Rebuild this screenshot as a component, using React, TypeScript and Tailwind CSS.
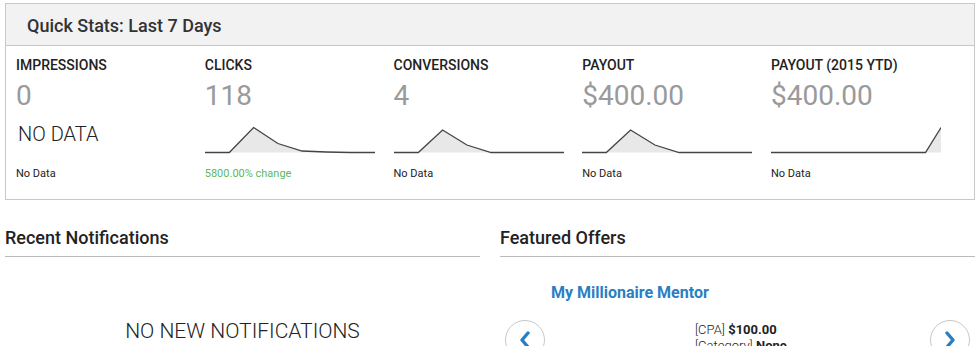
import React from 'react';

type Stat = {
  label: string;
  value: string;
  note: string;
  green?: boolean;
  points?: number[];
  noData?: boolean;
};

const stats: Stat[] = [
  { label: 'IMPRESSIONS', value: '0', note: 'No Data', noData: true },
  { label: 'CLICKS', value: '118', note: '5800.00% change', green: true, points: [0, 0, 1, 0.36, 0.06, 0.02, 0, 0] },
  { label: 'CONVERSIONS', value: '4', note: 'No Data', points: [0, 0, 0.9, 0.3, 0, 0, 0, 0] },
  { label: 'PAYOUT', value: '$400.00', note: 'No Data', points: [0, 0, 0.9, 0.3, 0, 0, 0, 0] },
  { label: 'PAYOUT (2015 YTD)', value: '$400.00', note: 'No Data', points: [0, 0, 0, 0, 0, 0, 0, 0, 0, 0, 0, 1] },
];

function Sparkline({ points }: { points: number[] }) {
  const w = 170;
  const h = 28;
  const step = w / (points.length - 1);
  const coords = points.map((p, i) => [i * step, h - 1.5 - p * (h - 3)]);
  const line = coords.map(([x, y]) => `${x.toFixed(1)},${y.toFixed(1)}`).join(' ');
  return (
    <svg width={w} height={h} className="block">
      <polygon points={`0,${h - 1.5} ${line} ${w},${h - 1.5}`} fill="#e8e8e8" />
      <polyline points={line} fill="none" stroke="#444" strokeWidth="1.3" />
    </svg>
  );
}

function StatColumn({ s }: { s: Stat }) {
  return (
    <div className="flex flex-col">
      <div className="text-[14px] font-medium leading-4 text-[#222]">{s.label}</div>
      <div className="mt-[7px] text-[28px] leading-8 text-[#9a9a9a]">{s.value}</div>
      <div className="mt-[14px] h-[28px]">
        {s.noData ? (
          <div className="-mt-[4px] pl-[2px] text-[20px] font-light leading-6 text-[#222]">NO DATA</div>
        ) : (
          <Sparkline points={s.points!} />
        )}
      </div>
      <div className={`mt-[12px] text-[11px] leading-4 ${s.green ? 'text-[#5cb85c]' : 'text-[#222]'}`}>{s.note}</div>
    </div>
  );
}

function Chevron({ dir }: { dir: 'left' | 'right' }) {
  return (
    <svg width="14" height="18" viewBox="0 0 14 18">
      <path
        d={dir === 'left' ? 'M10 2 L4 9 L10 16' : 'M4 2 L10 9 L4 16'}
        fill="none"
        stroke="#2a7fc4"
        strokeWidth="3.4"
        strokeLinecap="round"
        strokeLinejoin="round"
      />
    </svg>
  );
}

export default function App() {
  return (
    <div className="w-[980px] h-[346px] overflow-hidden bg-white font-['Roboto',sans-serif] text-[#222]">
      <section className="mx-[5px] mt-[3px] w-[970px] border border-[#c8c8c8]">
        <div className="flex h-[42px] items-center border-b border-[#c8c8c8] bg-[#f2f2f2] pl-[21px] pt-[3px]">
          <h2 className="text-[18px] font-medium leading-6 text-[#333]">Quick Stats: Last 7 Days</h2>
        </div>
        <div className="grid grid-cols-[repeat(5,188.75px)] px-[10px] pb-[17px] pt-[11px]">
          {stats.map((s) => (
            <StatColumn key={s.label} s={s} />
          ))}
        </div>
      </section>

      <div className="mx-[5px] mt-[26px] grid grid-cols-[475px_475px] gap-[20px]">
        <div>
          <h3 className="border-b border-[#bbb] pb-[6px] text-[18px] font-medium leading-6 text-[#222]">Recent Notifications</h3>
          <div className="pt-[62px] text-center text-[21px] font-light leading-6 text-[#222]">NO NEW NOTIFICATIONS</div>
        </div>
        <div>
          <h3 className="border-b border-[#bbb] pb-[6px] text-[18px] font-medium leading-6 text-[#222]">Featured Offers</h3>
          <div className="pl-[51px] pt-[26px] text-[16px] font-bold leading-5 text-[#2a7fc4]">My Millionaire Mentor</div>
          <div className="mt-[17px] flex items-start justify-between px-[5px]">
            <button className="flex h-[40px] w-[40px] items-center justify-center rounded-full border border-[#c8c8c8] bg-white">
              <Chevron dir="left" />
            </button>
            <div className="mr-auto ml-[150px] pt-[2px] text-[13px] leading-4 text-[#222]">
              <div>
                <span className="font-light">[CPA]</span> <span className="font-bold">$100.00</span>
              </div>
              <div>
                <span className="font-light">[Category]</span> <span className="font-bold">None</span>
              </div>
            </div>
            <button className="flex h-[40px] w-[40px] items-center justify-center rounded-full border border-[#c8c8c8] bg-white">
              <Chevron dir="right" />
            </button>
          </div>
        </div>
      </div>
    </div>
  );
}
